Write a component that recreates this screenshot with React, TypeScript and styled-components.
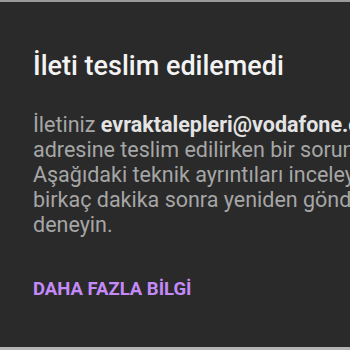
import React from "react";
import styled, { createGlobalStyle } from "styled-components";

const GlobalStyle = createGlobalStyle`
  html, body {
    margin: 0;
    padding: 0;
    background: #2a2a2a;
    overflow: hidden;
  }
`;

const Frame = styled.div`
  box-sizing: border-box;
  width: 350px;
  height: 350px;
  overflow: hidden;
  background: #2a2a2a;
  border-top: 2px solid #9a9a9a;
  border-bottom: 3px solid #b4b4b4;
  font-family: Roboto, "Noto Sans", sans-serif;
  padding: 48px 0 0 33px;
  display: flex;
  flex-direction: column;
`;

const Title = styled.h1`
  margin: 0;
  font-size: 27px;
  line-height: 32px;
  font-weight: 500;
  color: #f3f3f3;
  white-space: nowrap;
`;

const Message = styled.p`
  margin: 30px 0 0;
  font-size: 21.5px;
  line-height: 25px;
  color: #a6a6a6;
  white-space: nowrap;
`;

const Address = styled.b`
  font-weight: 700;
  color: #e4e4e4;
`;

const MoreLink = styled.a`
  margin-top: 41px;
  font-size: 18.5px;
  line-height: 22px;
  font-weight: 700;
  color: #c58af9;
  text-decoration: none;
  white-space: nowrap;
`;

export default function App() {
  return (
    <>
      <GlobalStyle />
      <Frame>
        <Title>İleti teslim edilemedi</Title>
        <Message>
          İletiniz <Address>evraktalepleri@vodafone.com.tr</Address>
          <br />
          adresine teslim edilirken bir sorun oluştu.
          <br />
          Aşağıdaki teknik ayrıntıları inceleyin veya
          <br />
          birkaç dakika sonra yeniden göndermeyi
          <br />
          deneyin.
        </Message>
        <MoreLink href="#">DAHA FAZLA BİLGİ</MoreLink>
      </Frame>
    </>
  );
}
